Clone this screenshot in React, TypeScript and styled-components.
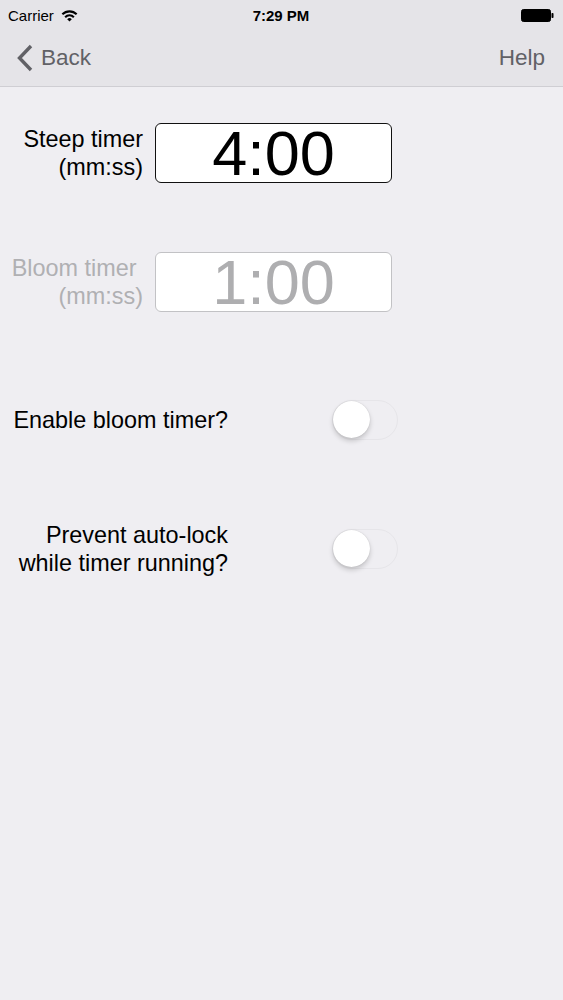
import React from "react";
import styled, { createGlobalStyle } from "styled-components";

const Global = createGlobalStyle`
  html, body {
    margin: 0;
    padding: 0;
    background: #efeef2;
    font-family: "Liberation Sans", Arial, sans-serif;
  }
  #root { min-height: 1000px; }
`;

const Screen = styled.div`
  width: 563px;
  min-height: 1000px;
  background: #efeef2;
`;

const Header = styled.header`
  background: #e5e4e8;
  border-bottom: 1px solid #cfced3;
`;

const StatusBar = styled.div`
  height: 30px;
  display: grid;
  grid-template-columns: 1fr auto 1fr;
  align-items: center;
  padding: 0 9px 0 8px;
  font-size: 15px;
  color: #000;
`;

const Carrier = styled.div`
  display: flex;
  align-items: center;
  gap: 7px;
`;

const Clock = styled.div`
  font-weight: bold;
`;

const BatterySlot = styled.div`
  display: flex;
  justify-content: flex-end;
`;

const NavBar = styled.nav`
  height: 56px;
  display: flex;
  align-items: center;
  justify-content: space-between;
  padding: 0 18px 0 16px;
  color: #616166;
  font-size: 22.5px;
`;

const NavButton = styled.span`
  display: flex;
  align-items: center;
  gap: 7px;
`;

const Content = styled.main`
  display: flex;
  flex-direction: column;
  padding-top: 36px;
`;

const TimerRow = styled.div<{ $gap: number }>`
  display: grid;
  grid-template-columns: 143px 237px;
  column-gap: 12px;
  align-items: center;
  margin-bottom: ${(p) => p.$gap}px;
`;

const ToggleRow = styled.div<{ $gap: number }>`
  display: grid;
  grid-template-columns: 228px 66px;
  column-gap: 104px;
  align-items: center;
  margin-bottom: ${(p) => p.$gap}px;
`;

const Label = styled.div<{ $dim?: boolean }>`
  text-align: right;
  font-size: 23.4px;
  line-height: 28px;
  white-space: nowrap;
  color: ${(p) => (p.$dim ? "#b0b0b3" : "#000")};
`;

const TimeBox = styled.div<{ $dim?: boolean }>`
  height: 60px;
  box-sizing: border-box;
  border: 1.5px solid ${(p) => (p.$dim ? "#c2c2c5" : "#111")};
  border-radius: 6px;
  background: #fff;
  display: flex;
  align-items: center;
  justify-content: center;
  font-size: 63px;
  line-height: 1;
  color: ${(p) => (p.$dim ? "#aeaeb0" : "#000")};
`;

const Track = styled.div`
  width: 66px;
  height: 40px;
  box-sizing: border-box;
  border-radius: 20px;
  border: 1.5px solid #e6e5e9;
  background: #efeef2;
  position: relative;
`;

const Knob = styled.div`
  position: absolute;
  left: 0;
  top: 0;
  width: 37px;
  height: 37px;
  border-radius: 50%;
  background: #fff;
  box-shadow: 0 3px 5px rgba(0, 0, 0, 0.18), 0 0 1px rgba(0, 0, 0, 0.2);
`;

const Wifi = () => (
  <svg width="17" height="13" viewBox="0 0 17 13">
    <path d="M0.6 4.6 A11 11 0 0 1 16.4 4.6 L14.9 6.1 A9 9 0 0 0 2.1 6.1 Z" fill="#000" />
    <path d="M3.4 7.4 A7 7 0 0 1 13.6 7.4 L12.1 8.9 A5 5 0 0 0 4.9 8.9 Z" fill="#000" />
    <path d="M6.2 10.2 A3.2 3.2 0 0 1 10.8 10.2 L8.5 12.6 Z" fill="#000" />
  </svg>
);

const Battery = () => (
  <svg width="33" height="13" viewBox="0 0 33 13">
    <rect x="0.5" y="0.5" width="29" height="12" rx="2" fill="#000" stroke="#000" />
    <rect x="30.5" y="4" width="2" height="5" rx="0.8" fill="#000" />
  </svg>
);

const Chevron = () => (
  <svg width="18" height="28" viewBox="0 0 18 28">
    <path d="M15 2 L3.5 14 L15 26" fill="none" stroke="#616166" strokeWidth="3.4" strokeLinecap="butt" />
  </svg>
);

const Toggle = () => (
  <Track>
    <Knob />
  </Track>
);

export default function App() {
  return (
    <Screen>
      <Global />
      <Header>
        <StatusBar>
          <Carrier>
            Carrier
            <Wifi />
          </Carrier>
          <Clock>7:29 PM</Clock>
          <BatterySlot>
            <Battery />
          </BatterySlot>
        </StatusBar>
        <NavBar>
          <NavButton>
            <Chevron />
            Back
          </NavButton>
          <NavButton>Help</NavButton>
        </NavBar>
      </Header>
      <Content>
        <TimerRow $gap={69}>
          <Label>
            Steep timer
            <br />
            (mm:ss)
          </Label>
          <TimeBox>4:00</TimeBox>
        </TimerRow>
        <TimerRow $gap={88}>
          <Label $dim>
            Bloom timer{"\u00a0"}
            <br />
            (mm:ss)
          </Label>
          <TimeBox $dim>1:00</TimeBox>
        </TimerRow>
        <ToggleRow $gap={81}>
          <Label>Enable bloom timer?</Label>
          <Toggle />
        </ToggleRow>
        <ToggleRow $gap={0}>
          <Label>
            Prevent auto-lock
            <br />
            while timer running?
          </Label>
          <Toggle />
        </ToggleRow>
      </Content>
    </Screen>
  );
}
